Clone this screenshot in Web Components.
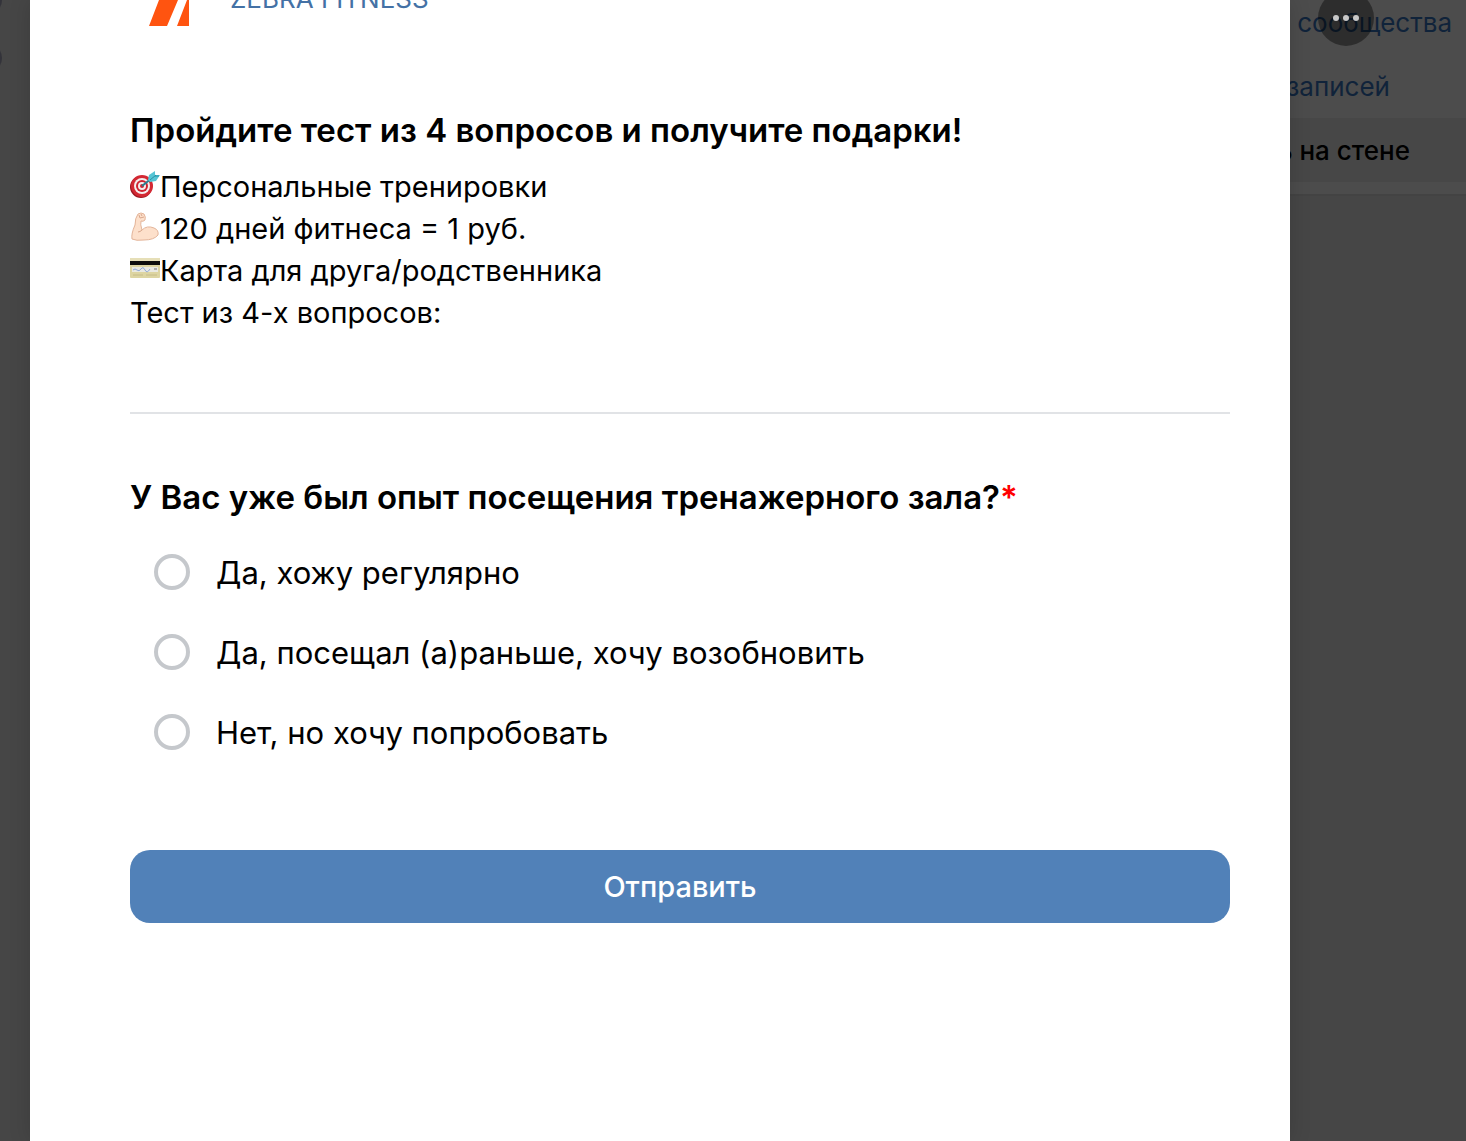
<!DOCTYPE html>
<html lang="ru">
<head>
<meta charset="utf-8">
<meta name="viewport" content="width=device-width, initial-scale=1">
<title>Zebra Fitness</title>
<style>
  html, body {
    height: 100%;
    margin: 0;
  }

  body {
    font-family: Inter, "Liberation Sans", sans-serif;
    color: #000;
    background: #464646;
    overflow: hidden;
  }
</style>
</head>
<body>

<form-page>
  <page-edge slot="left"></page-edge>

  <form-modal>
    <community-header slot="header" href="#zebra" name="ZEBRA FITNESS"></community-header>

    <form-intro>
      <span slot="title">Пройдите тест из 4 вопросов и получите подарки!</span>
      <intro-line icon="target">Персональные тренировки</intro-line>
      <intro-line icon="arm">120 дней фитнеса = 1 руб.</intro-line>
      <intro-line icon="card">Карта для друга/родственника</intro-line>
      <intro-line>Тест из 4-х вопросов:</intro-line>
    </form-intro>

    <radio-question name="experience" required>
      <span slot="title">У Вас уже был опыт посещения тренажерного зала?</span>
      <option>Да, хожу регулярно</option>
      <option>Да, посещал (а)раньше, хочу возобновить</option>
      <option>Нет, но хочу попробовать</option>
    </radio-question>

    <submit-button>Отправить</submit-button>
  </form-modal>

  <side-menu slot="right">
    <side-item class="first">сообщества</side-item>
    <side-item class="second">записей</side-item>
    <side-item class="third" selected>ь на стене</side-item>
  </side-menu>

  <more-button slot="more"></more-button>
</form-page>

<script>
(function formComponents(){
  'use strict';

  const icons = {
    target: `
      <svg viewBox="0 0 30 30" role="img" aria-label="Мишень">
        <circle cx="11" cy="17" r="11" fill="#9c1620"/>
        <circle cx="12" cy="16" r="11" fill="#d32833"/>
        <circle cx="12" cy="16" r="8" fill="#f5eeee"/>
        <circle cx="12" cy="16" r="6" fill="#cf2330"/>
        <circle cx="12" cy="16" r="4" fill="#f5eeee"/>
        <circle cx="12" cy="16" r="2" fill="#cf2330"/>
        <path d="M12 16 L22 8" stroke="#277f91" stroke-width="2"/>
        <path d="M18 10 L19 5 L25 1 L25 5 L30 5 L26 11 L20 12 Z" fill="#55c5d5"/>
        <path d="M20 10 L26 5 M25 6 L29 6" stroke="#278fa5" stroke-width="1"/>
      </svg>`,
    arm: `
      <svg viewBox="0 0 30 30" role="img" aria-label="Бицепс">
        <path d="M8 2 Q11 0 14 2 Q16 5 15 8 Q13 10 11 9 Q10 12 12 18 Q17 13 24 16 Q29 18 28 23 Q24 28 14 28 Q6 29 2 27 Q1 22 5 13 Q5 6 8 2 Z" fill="#fde0cb" stroke="#e3b499" stroke-width="1"/>
        <path d="M9 3 L10 6 L14 5 M11 2 L12 4 M12 18 Q10 20 8 20" fill="none" stroke="#d8a68b" stroke-width="1"/>
      </svg>`,
    card: `
      <svg viewBox="0 0 30 30" role="img" aria-label="Карта">
        <rect y="4" width="30" height="20" rx="1" fill="#ddd5a2"/>
        <rect y="4" width="30" height="3" fill="#e6dfb8"/>
        <rect y="7" width="30" height="4" fill="#0d0d0c"/>
        <rect x="2" y="13" width="26" height="5" fill="#e9e9e2"/>
        <path d="M3 16 Q5 14 7 16 T11 15 T15 16 T20 15" fill="none" stroke="#8fa9d8" stroke-width="1"/>
        <path d="M24 15 H27" stroke="#777" stroke-width="1"/>
        <path d="M3 21 H13 M16 21 H27" stroke="#c6bc88" stroke-width="1"/>
      </svg>`
  };


  class FormPage extends HTMLElement{
    constructor(){
      super();
      const shadowRoot = this.attachShadow({mode: 'open'});
      shadowRoot.innerHTML = `
        <style>
          :host{
            display: grid;
            grid-template-columns: 30px minmax(0, 1fr) 176px;
            min-height: 100vh;
            position: relative;
          }
        </style>
        <slot name="left"></slot>
        <slot></slot>
        <slot name="right"></slot>
        <slot name="more"></slot>
      `;
    }
  }


  // strip of the dimmed page on the left
  class PageEdge extends HTMLElement{
    constructor(){
      super();
      const shadowRoot = this.attachShadow({mode: 'open'});
      shadowRoot.innerHTML = `
        <style>
          :host{
            display: block;
            background: #464646;
          }
          svg{
            display: block;
          }
        </style>
        <svg width="30" height="90" viewBox="0 0 30 90" aria-hidden="true">
          <circle cx="-12" cy="0" r="14" fill="#33333a"/>
          <circle cx="-12" cy="58" r="14" fill="#33333a"/>
        </svg>
      `;
    }
  }


  class FormModal extends HTMLElement{
    constructor(){
      super();
      const shadowRoot = this.attachShadow({mode: 'open'});
      shadowRoot.innerHTML = `
        <style>
          :host{
            display: block;
            background: #fff;
            box-shadow: 0 0 20px rgba(0, 0, 0, .15);
            z-index: 1;
          }
          form{
            display: flex;
            flex-direction: column;
            padding: 0 60px 80px 100px;
          }
        </style>
        <form>
          <slot name="header"></slot>
          <slot></slot>
        </form>
      `;
    }
  }


  class CommunityHeader extends HTMLElement{
    constructor(){
      super();
      const shadowRoot = this.attachShadow({mode: 'open'});
      shadowRoot.innerHTML = `
        <style>
          :host{
            display: flex;
            align-items: flex-end;
            gap: 40px;
            height: 26px;
            padding-left: 19px;
            margin-bottom: 82px;
            overflow: hidden;
          }
          svg{
            flex: none;
          }
          a{
            padding-bottom: 10px;
            font-size: 26px;
            line-height: 34px;
            color: #4471a5;
            text-decoration: none;
          }
        </style>
        <svg width="41" height="26" viewBox="0 0 41 26" aria-hidden="true">
          <path d="M10 0 H29 L18 26 H0 Z M38 0 H40 V26 H28 Z" fill="#ff5410"/>
        </svg>
        <a href="${this.getAttribute('href')}">${this.getAttribute('name')}</a>
      `;
    }
  }


  class FormIntro extends HTMLElement{
    constructor(){
      super();
      const shadowRoot = this.attachShadow({mode: 'open'});
      shadowRoot.innerHTML = `
        <style>
          :host{
            display: block;
            padding-bottom: 78px;
            border-bottom: 2px solid #e1e3e6;
          }
          h1{
            margin: 0 0 14px;
            font-size: 33px;
            font-weight: 600;
            line-height: 44px;
          }
        </style>
        <h1><slot name="title"></slot></h1>
        <slot></slot>
      `;
    }
  }


  class IntroLine extends HTMLElement{
    constructor(){
      super();
      const shadowRoot = this.attachShadow({mode: 'open'});
      shadowRoot.innerHTML = `
        <style>
          :host{
            display: flex;
            font-size: 29px;
            line-height: 42px;
          }
          svg{
            flex: none;
            width: 30px;
            height: 30px;
            margin-top: 4px;
          }
        </style>
        ${icons[this.getAttribute('icon')] || ''}
        <span><slot></slot></span>
      `;
    }
  }


  class RadioQuestion extends HTMLElement{
    constructor(){
      super();
      const shadowRoot = this.attachShadow({mode: 'open'});
      shadowRoot.innerHTML = `
        <style>
          :host{
            display: block;
            padding: 61px 0 78px;
          }
          fieldset{
            margin: 0;
            padding: 0;
            border: 0;
          }
          legend{
            padding: 0 0 13px;
            font-size: 33px;
            font-weight: 600;
            line-height: 44px;
          }
          .required{
            color: #f00;
          }
          label{
            display: flex;
            align-items: center;
            gap: 26px;
            height: 80px;
            padding-left: 24px;
            font-size: 31px;
            cursor: pointer;
          }
          input{
            appearance: none;
            flex: none;
            box-sizing: border-box;
            width: 36px;
            height: 36px;
            margin: 0;
            border: 4px solid #c5c8cc;
            border-radius: 50%;
          }
          input:checked{
            border: 10px solid #5181b8;
          }
        </style>
        <fieldset>
          <legend><slot name="title"></slot><span class="required">*</span></legend>
        </fieldset>
      `;

      // all radios share one root so that they stay in one group
      const fieldset = shadowRoot.querySelector('fieldset');
      this.querySelectorAll('option').forEach((option) => {
        const label = document.createElement('label');
        const input = document.createElement('input');
        input.type = 'radio';
        input.name = this.getAttribute('name');
        label.append(input, option.textContent);
        fieldset.appendChild(label);
      });
    }
  }


  class SubmitButton extends HTMLElement{
    constructor(){
      super();
      const shadowRoot = this.attachShadow({mode: 'open'});
      shadowRoot.innerHTML = `
        <style>
          :host{
            display: block;
          }
          button{
            display: block;
            width: 100%;
            height: 73px;
            border: 0;
            border-radius: 20px;
            background: #5181b8;
            color: #fff;
            font: inherit;
            font-size: 29px;
            font-weight: 500;
            cursor: pointer;
          }
        </style>
        <button type="button"><slot></slot></button>
      `;
    }
  }


  class SideMenu extends HTMLElement{
    constructor(){
      super();
      const shadowRoot = this.attachShadow({mode: 'open'});
      shadowRoot.innerHTML = `
        <style>
          :host{
            display: block;
            overflow: hidden;
          }
          nav{
            height: 196px;
            box-sizing: border-box;
            background: #4c4c4c;
            border-bottom: 2px solid #434343;
          }
          ::slotted(.first){
            padding-right: 14px;
          }
          ::slotted(.second){
            padding-right: 76px;
          }
          ::slotted(.third){
            padding-right: 56px;
          }
        </style>
        <nav><slot></slot></nav>
      `;
    }
  }


  class SideItem extends HTMLElement{
    constructor(){
      super();
      const shadowRoot = this.attachShadow({mode: 'open'});
      shadowRoot.innerHTML = `
        <style>
          :host{
            display: flex;
            align-items: center;
            justify-content: flex-end;
            height: 64px;
            font-size: 26px;
            white-space: nowrap;
          }
          :host(.first){
            height: 54px;
            padding-bottom: 10px;
            box-sizing: border-box;
          }
          :host([selected]){
            background: #474747;
            font-weight: 500;
          }
          a{
            color: #10233a;
            text-decoration: none;
          }
          :host([selected]) a{
            color: #000;
          }
        </style>
        <a href="#"><slot></slot></a>
      `;
    }
  }


  class MoreButton extends HTMLElement{
    constructor(){
      super();
      const shadowRoot = this.attachShadow({mode: 'open'});
      shadowRoot.innerHTML = `
        <style>
          :host{
            position: absolute;
            top: -10px;
            right: 92px;
          }
          button{
            display: block;
            width: 56px;
            height: 56px;
            padding: 0;
            border: 0;
            border-radius: 50%;
            background: rgba(0, 0, 0, .4);
            cursor: pointer;
          }
          svg{
            display: block;
          }
        </style>
        <button type="button" aria-label="Ещё">
          <svg width="56" height="56" viewBox="0 0 56 56" fill="#c8c8c8">
            <circle cx="18" cy="28" r="3"/>
            <circle cx="28" cy="28" r="3"/>
            <circle cx="38" cy="28" r="3"/>
          </svg>
        </button>
      `;
    }
  }


  //Page
  customElements.define('form-page', FormPage);
  customElements.define('page-edge', PageEdge);
  customElements.define('side-menu', SideMenu);
  customElements.define('side-item', SideItem);
  customElements.define('more-button', MoreButton);

  //Form
  customElements.define('form-modal', FormModal);
  customElements.define('community-header', CommunityHeader);
  customElements.define('form-intro', FormIntro);
  customElements.define('intro-line', IntroLine);
  customElements.define('radio-question', RadioQuestion);
  customElements.define('submit-button', SubmitButton);

})();
</script>
</body>
</html>
